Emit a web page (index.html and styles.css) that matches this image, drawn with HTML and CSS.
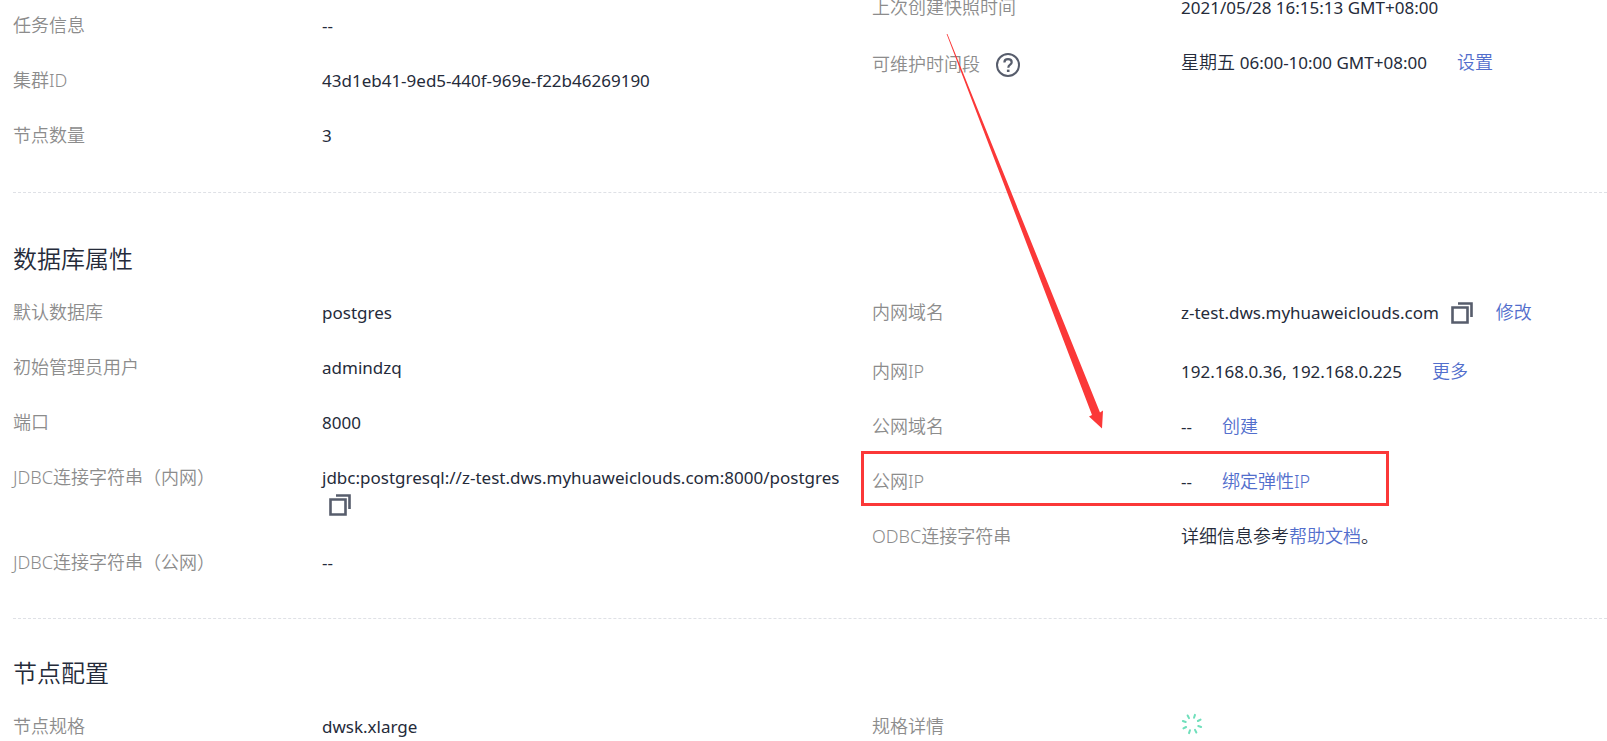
FILE: index.html
```html
<!DOCTYPE html>
<html lang="zh-CN">
<head>
<meta charset="utf-8">
<title>集群详情</title>
<link rel="stylesheet" href="styles.css">
</head>
<body>
<svg class="defs" width="0" height="0" aria-hidden="true">
  <symbol id="copy" viewBox="0 0 22 22">
    <path d="M1.5 5.5H16.5V20.5H1.5ZM7 1.5H20.5V15" fill="none" stroke="#575d6c" stroke-width="2.6"/>
  </symbol>
</svg>
<main class="page">
  <section class="section section-basic">
    <dl class="list list-basic">
      <div class="row"><dt>任务信息</dt><dd>--</dd></div>
      <div class="row"><dt>集群ID</dt><dd>43d1eb41-9ed5-440f-969e-f22b46269190</dd></div>
      <div class="row"><dt>节点数量</dt><dd>3</dd></div>
    </dl>
    <dl class="list list-snapshot">
      <div class="row"><dt>上次创建快照时间</dt><dd>2021/05/28 16:15:13 GMT+08:00</dd></div>
      <div class="row">
        <dt class="with-help">可维护时间段
          <button class="icon-btn help" type="button" aria-label="帮助">
            <svg width="24" height="24" viewBox="0 0 24 24" fill="none" stroke="#575d6c"><circle cx="12" cy="12" r="11" stroke-width="2"/><path d="M8.4 9.4C8.4 7.3 9.8 6.2 12 6.2S15.7 7.4 15.7 9.3C15.7 11.7 12.3 11.7 12.3 14.7" stroke-width="2.2"/><path d="M12.2 16.6V19" stroke-width="2.6"/></svg>
          </button>
        </dt>
        <dd><span class="han">星期五&nbsp;</span>06:00-10:00 GMT+08:00<a class="action" href="#">设置</a></dd>
      </div>
    </dl>
  </section>

  <section class="section section-database">
    <h2>数据库属性</h2>
    <dl class="list">
      <div class="row"><dt>默认数据库</dt><dd>postgres</dd></div>
      <div class="row"><dt>初始管理员用户</dt><dd>admindzq</dd></div>
      <div class="row"><dt>端口</dt><dd>8000</dd></div>
      <div class="row">
        <dt>JDBC连接字符串（内网）</dt>
        <dd>jdbc:postgresql://z-test.dws.myhuaweiclouds.com:8000/postgres
          <button class="icon-btn copy-below" type="button" aria-label="复制"><svg width="22" height="22"><use href="#copy"/></svg></button>
        </dd>
      </div>
      <div class="row"><dt>JDBC连接字符串（公网）</dt><dd>--</dd></div>
    </dl>
    <dl class="list">
      <div class="row row-tall">
        <dt>内网域名</dt>
        <dd>z-test.dws.myhuaweiclouds.com<button class="icon-btn copy-inline" type="button" aria-label="复制"><svg width="22" height="22"><use href="#copy"/></svg></button><a class="action action-near" href="#">修改</a></dd>
      </div>
      <div class="row"><dt>内网IP</dt><dd>192.168.0.36, 192.168.0.225<a class="action" href="#">更多</a></dd></div>
      <div class="row"><dt>公网域名</dt><dd>--<a class="action" href="#">创建</a></dd></div>
      <div class="row row-marked"><dt>公网IP</dt><dd>--<a class="action" href="#">绑定弹性IP</a></dd></div>
      <div class="row"><dt>ODBC连接字符串</dt><dd class="han">详细信息参考<a href="#">帮助文档</a>。</dd></div>
    </dl>
  </section>

  <section class="section section-nodes">
    <h2>节点配置</h2>
    <dl class="list">
      <div class="row"><dt>节点规格</dt><dd>dwsk.xlarge</dd></div>
    </dl>
    <dl class="list">
      <div class="row">
        <dt>规格详情</dt>
        <dd>
          <svg class="spinner" width="22" height="22" viewBox="-11 -11 22 22" role="img" aria-label="加载中" stroke="#6fdfbb" stroke-width="2" stroke-linecap="round">
            <g transform="rotate(18)"><path d="M0-9.6V-6.6M0 9.6V6.6M-9.6 0H-6.6M9.6 0H6.6"/></g>
            <g transform="rotate(-27)"><path d="M0-9.6V-6.6M0 9.6V6.6M-9.6 0H-6.6M9.6 0H6.6"/></g>
          </svg>
        </dd>
      </div>
    </dl>
  </section>

  <svg class="arrow" width="160" height="396" viewBox="0 0 160 396" aria-hidden="true">
    <path d="M1.6 1L147 382L144 383.5L157 395.5L158 377.5L155 379.5L2.4 1Z" fill="#fb3838"/>
  </svg>
</main>
</body>
</html>
```
FILE: styles.css
```css
*,
*::after {
  box-sizing: border-box;
}

body {
  margin: 0;
  background: #fff;
  color: #252b3a;
  font-family: "Noto Sans", "Noto Sans CJK SC", sans-serif;
  font-size: 17px;
  line-height: 27px;
}

.defs {
  position: absolute;
}

.page {
  position: relative;
  height: 100vh;
  overflow: hidden;
  padding-left: 13px;
}

.section {
  display: grid;
  grid-template-columns: 859fr 735fr;
  padding: 48px 0 15px;
  border-bottom: 1px dashed #dfe1e6;
}

.section-basic {
  padding-top: 0;
}

.section-database {
  padding-bottom: 14px;
}

.section-nodes {
  padding-top: 36px;
  border-bottom: 0;
}

h2 {
  grid-column: 1 / -1;
  margin: 0 0 22px;
  font-size: 24px;
  font-weight: 350;
  line-height: 36px;
}

.list {
  margin: 0;
}

.list-basic {
  padding-top: 12px;
}

.list-snapshot {
  margin-top: -6px;
}

.row {
  position: relative;
  display: grid;
  grid-template-columns: 309px 1fr;
  margin-bottom: 28px;
}

.row-tall {
  min-height: 31px;
}

dt {
  display: flex;
  align-items: center;
  align-self: start;
  color: #8c8c8c;
  font-size: 18px;
  font-weight: 350;
}

.with-help {
  padding-top: 2px;
}

dd {
  margin: 0;
  display: flex;
  flex-wrap: wrap;
  align-items: center;
  align-self: start;
}

.han {
  font-size: 18px;
  font-weight: 350;
}

a {
  color: #526ecc;
  font-size: 18px;
  font-weight: 350;
  text-decoration: none;
}

.action {
  margin-left: 30px;
}

.action-near {
  margin-left: 23px;
}

.icon-btn {
  display: flex;
  padding: 0;
  border: 0;
  background: none;
  cursor: pointer;
}

.help {
  margin-left: 16px;
}

.copy-inline {
  margin-left: 12px;
}

.copy-below {
  margin: 3px 100% 5px 7px;
}

.row-marked::after {
  content: "";
  position: absolute;
  top: -17px;
  bottom: -11px;
  left: -11px;
  width: 528px;
  border: 3px solid #fb3838;
  pointer-events: none;
}

.arrow {
  position: absolute;
  top: 33px;
  left: 945px;
  pointer-events: none;
}
```
